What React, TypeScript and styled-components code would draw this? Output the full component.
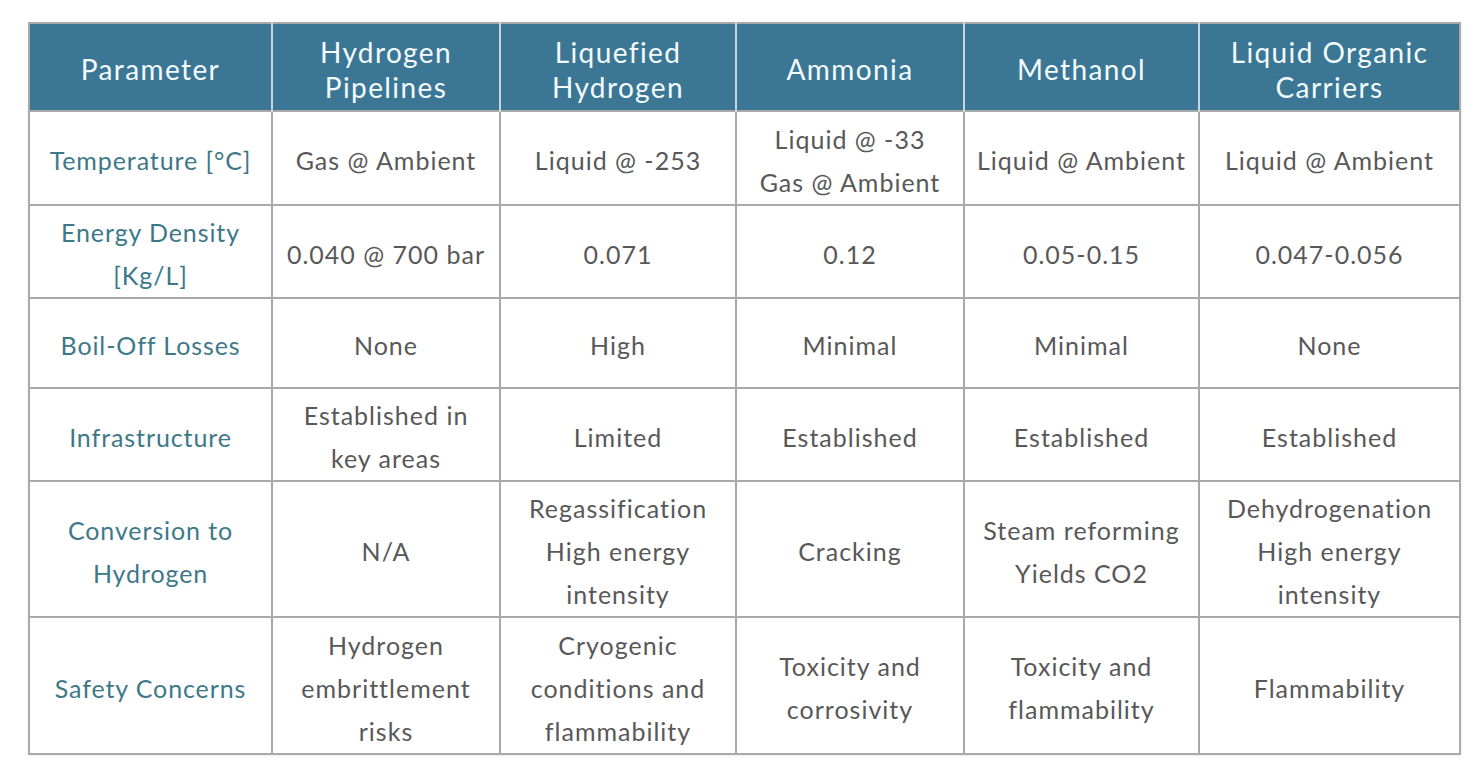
import React from "react";
import styled, { createGlobalStyle } from "styled-components";

const Global = createGlobalStyle`
  html, body { margin: 0; padding: 0; background: #ffffff; }
  body { font-family: "Lato", "Open Sans", sans-serif; }
`;

const Page = styled.div`
  width: 1480px;
  height: 784px;
  padding: 22px 0 0 28px;
  box-sizing: border-box;
  background: #fff;
`;

const Table = styled.table`
  border-collapse: collapse;
  table-layout: fixed;
  width: 1431px;
  border: 2px solid #a9a9a9;
  box-shadow: 0 1px 3px rgba(0, 0, 0, 0.08);
`;

const HeadCell = styled.th`
  background: #3b7795;
  color: #f4fbfd;
  font-weight: 400;
  font-size: 28px;
  letter-spacing: 1.4px;
  line-height: 35px;
  text-align: center;
  vertical-align: middle;
  padding: 5px 0 0;
  border-left: 2px solid #c6d6de;
  white-space: nowrap;
  &:first-child { border-left: none; }
`;

const HeadRow = styled.tr`
  height: 88px;
`;

const BodyRow = styled.tr<{ $h: number }>`
  height: ${(p) => p.$h}px;
`;

const LabelCell = styled.td`
  color: #3d7888;
  font-size: 25px;
  letter-spacing: 0.9px;
  line-height: 43px;
  text-align: center;
  vertical-align: middle;
  border: 2px solid #a9a9a9;
  padding: 5px 0 0;
  white-space: nowrap;
`;

const ValueCell = styled.td`
  color: #585858;
  font-size: 25px;
  letter-spacing: 1px;
  line-height: 43px;
  text-align: center;
  vertical-align: middle;
  border: 2px solid #a9a9a9;
  padding: 5px 0 0;
  white-space: nowrap;
`;

const cols = [243, 228, 236, 228, 235, 261];

const headers = [
  ["Parameter"],
  ["Hydrogen", "Pipelines"],
  ["Liquefied", "Hydrogen"],
  ["Ammonia"],
  ["Methanol"],
  ["Liquid Organic", "Carriers"],
];

type Row = { h: number; label: string[]; values: string[][] };

const rows: Row[] = [
  {
    h: 94,
    label: ["Temperature [°C]"],
    values: [
      ["Gas @ Ambient"],
      ["Liquid @ -253"],
      ["Liquid @ -33", "Gas @ Ambient"],
      ["Liquid @ Ambient"],
      ["Liquid @ Ambient"],
    ],
  },
  {
    h: 93,
    label: ["Energy Density", "[Kg/L]"],
    values: [["0.040 @ 700 bar"], ["0.071"], ["0.12"], ["0.05-0.15"], ["0.047-0.056"]],
  },
  {
    h: 90,
    label: ["Boil-Off Losses"],
    values: [["None"], ["High"], ["Minimal"], ["Minimal"], ["None"]],
  },
  {
    h: 92,
    label: ["Infrastructure"],
    values: [
      ["Established in", "key areas"],
      ["Limited"],
      ["Established"],
      ["Established"],
      ["Established"],
    ],
  },
  {
    h: 136,
    label: ["Conversion to", "Hydrogen"],
    values: [
      ["N/A"],
      ["Regassification", "High energy", "intensity"],
      ["Cracking"],
      ["Steam reforming", "Yields CO2"],
      ["Dehydrogenation", "High energy", "intensity"],
    ],
  },
  {
    h: 137,
    label: ["Safety Concerns"],
    values: [
      ["Hydrogen", "embrittlement", "risks"],
      ["Cryogenic", "conditions and", "flammability"],
      ["Toxicity and", "corrosivity"],
      ["Toxicity and", "flammability"],
      ["Flammability"],
    ],
  },
];

const Lines = ({ lines }: { lines: string[] }) => (
  <>
    {lines.map((l, i) => (
      <React.Fragment key={i}>
        {i > 0 && <br />}
        {l}
      </React.Fragment>
    ))}
  </>
);

export default function App() {
  return (
    <Page>
      <Global />
      <Table>
        <colgroup>
          {cols.map((w, i) => (
            <col key={i} style={{ width: w }} />
          ))}
        </colgroup>
        <thead>
          <HeadRow>
            {headers.map((h, i) => (
              <HeadCell key={i}>
                <Lines lines={h} />
              </HeadCell>
            ))}
          </HeadRow>
        </thead>
        <tbody>
          {rows.map((r, i) => (
            <BodyRow key={i} $h={r.h}>
              <LabelCell>
                <Lines lines={r.label} />
              </LabelCell>
              {r.values.map((v, j) => (
                <ValueCell key={j}>
                  <Lines lines={v} />
                </ValueCell>
              ))}
            </BodyRow>
          ))}
        </tbody>
      </Table>
    </Page>
  );
}
